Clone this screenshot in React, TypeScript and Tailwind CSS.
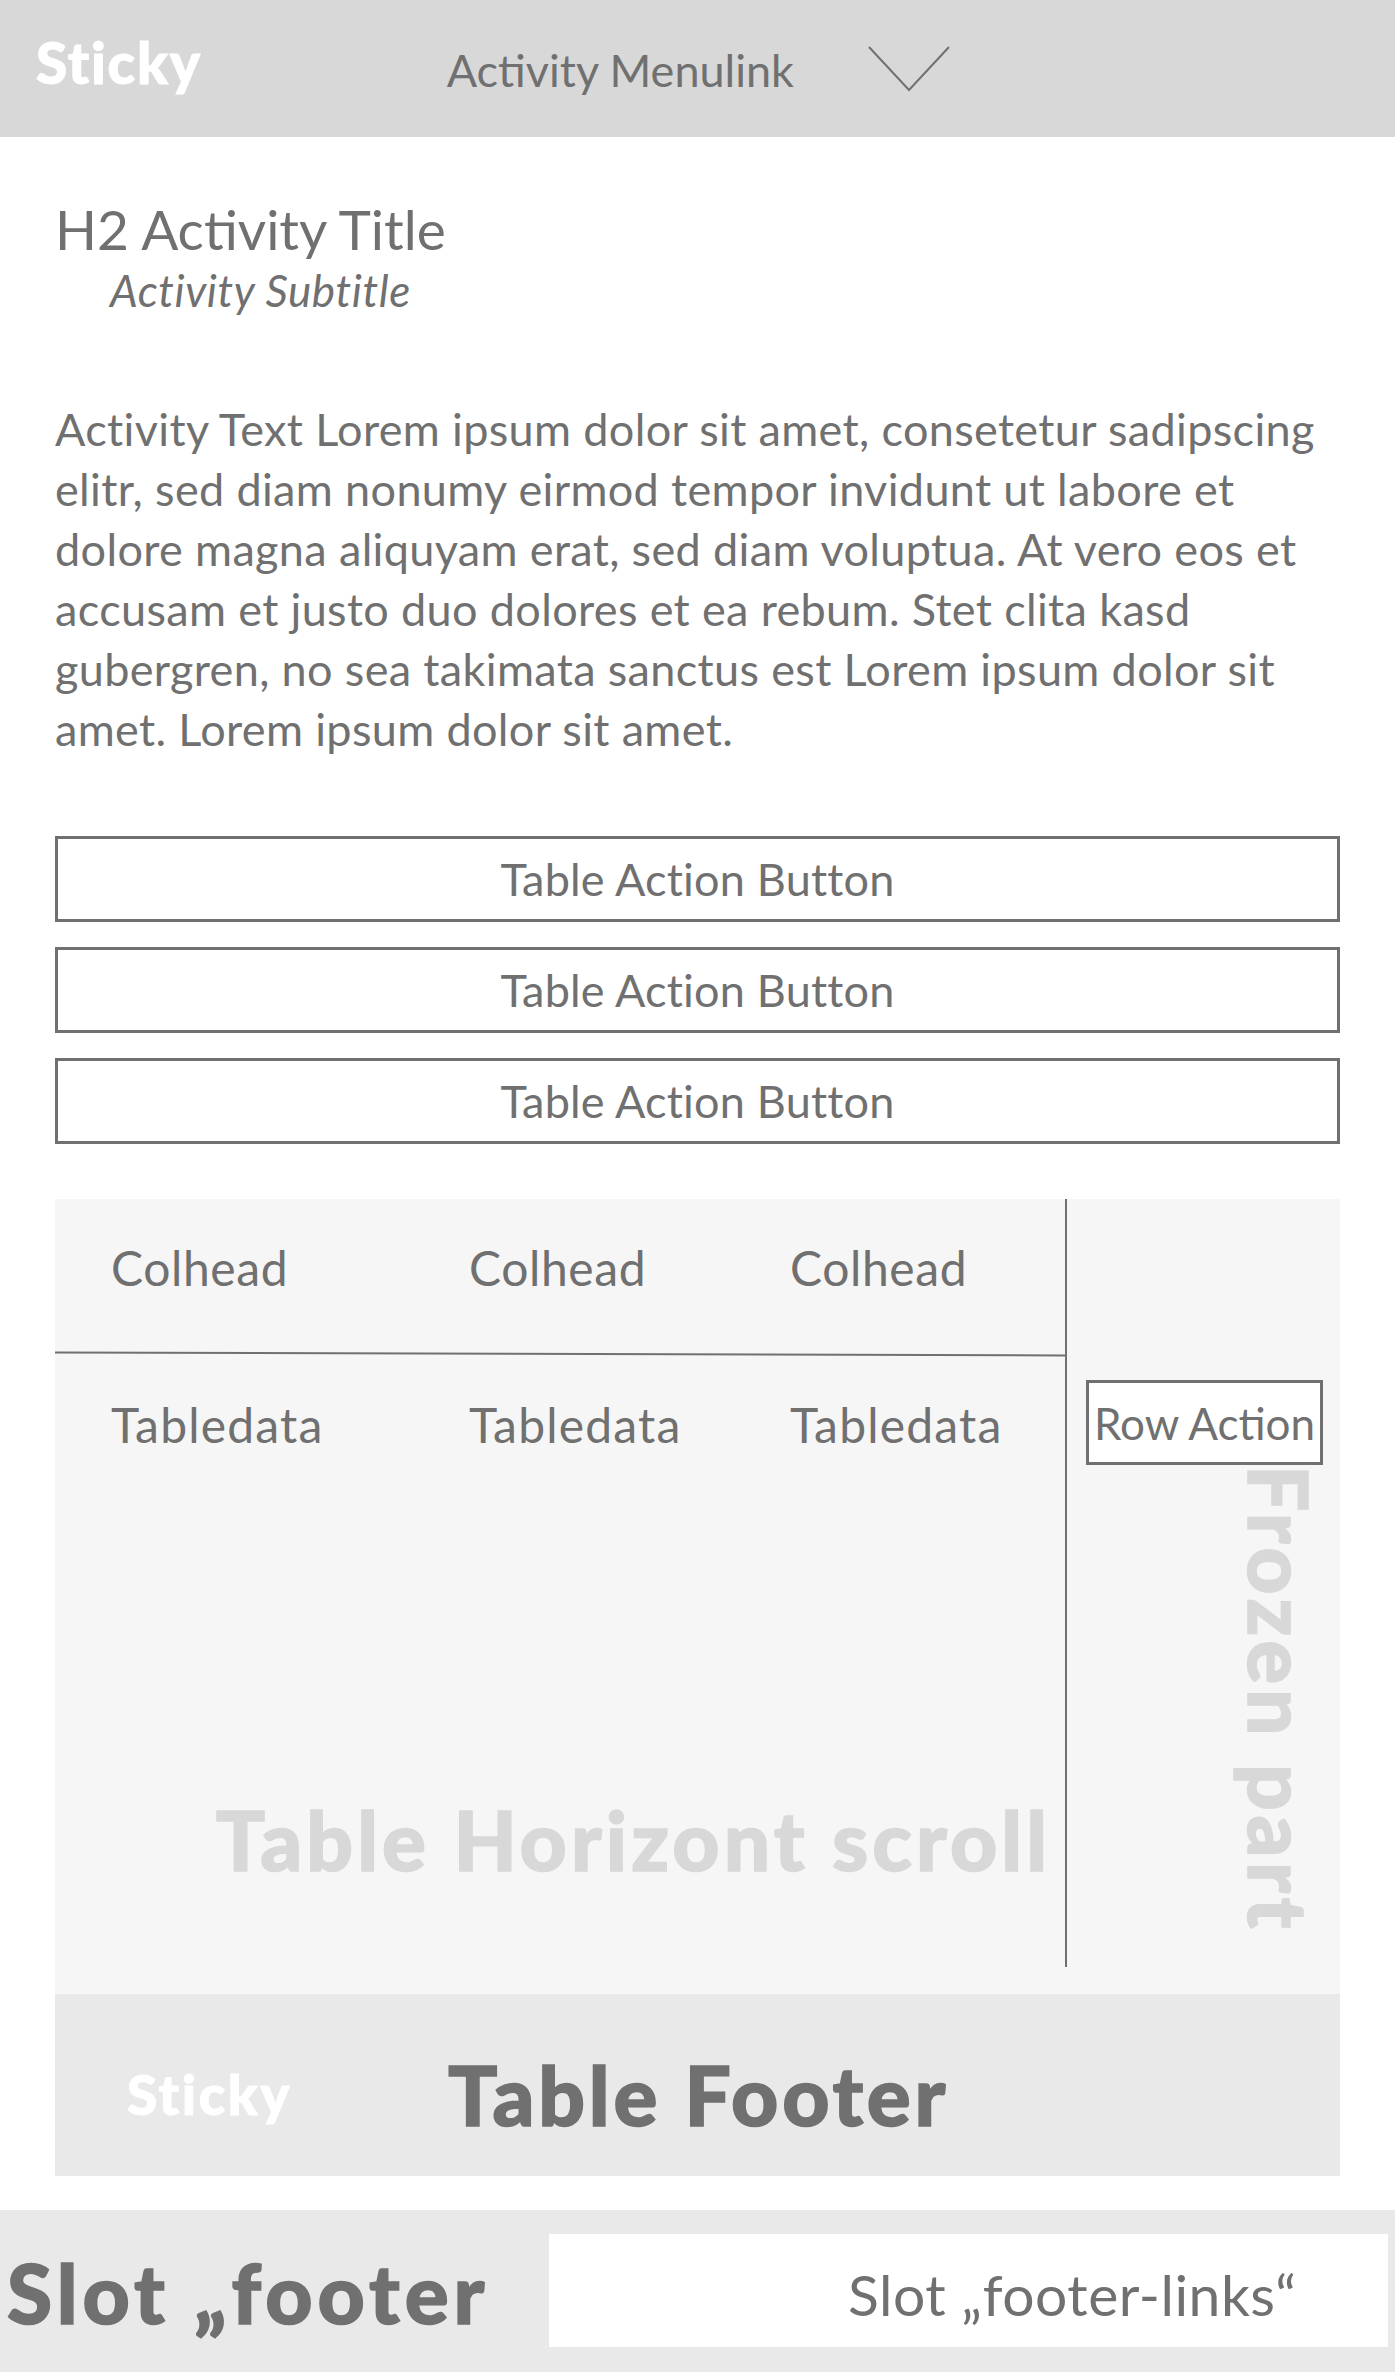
import React from "react";

const lines = [
  "Activity Text Lorem ipsum dolor sit amet, consetetur sadipscing",
  "elitr, sed diam nonumy eirmod tempor invidunt ut labore et",
  "dolore magna aliquyam erat, sed diam voluptua. At vero eos et",
  "accusam et justo duo dolores et ea rebum. Stet clita kasd",
  "gubergren, no sea takimata sanctus est Lorem ipsum dolor sit",
  "amet. Lorem ipsum dolor sit amet.",
];

function ActionButton() {
  return (
    <button className="h-[86px] w-full border-[3px] border-[#707070] bg-white text-[45px] leading-none tracking-[0.2px] text-[#707070]">
      Table Action Button
    </button>
  );
}

export default function App() {
  return (
    <div className="min-h-[2373px] bg-white font-[Lato,sans-serif] text-[#707070]">
      {/* Sticky header */}
      <header className="flex h-[137px] items-start bg-[#d8d8d8]">
        <span className="ml-[36px] mt-[34px] text-[57px] font-black leading-none tracking-[1.7px] text-white [-webkit-text-stroke:1px_currentColor]">
          Sticky
        </span>
        <span className="ml-[245px] mt-[48px] text-[45px] leading-none">Activity Menulink</span>
        <svg className="ml-[74px] mt-[46px]" width="82" height="46" viewBox="0 0 82 46">
          <polyline points="1,1 41,44 81,1" fill="none" stroke="#707070" strokeWidth="2" />
        </svg>
      </header>

      <main className="px-[55px] pt-[65px]">
        <h2 className="text-[55px] font-normal leading-none">H2 Activity Title</h2>
        <p className="ml-[55px] mt-[11px] text-[44px] italic leading-none tracking-[0.6px]">Activity Subtitle</p>

        <p className="mt-[87px] text-[45px] leading-[60px] tracking-[0.35px]">
          {lines.map((l, i) => (
            <span key={i} className="block whitespace-nowrap">
              {l}
            </span>
          ))}
        </p>

        <div className="mt-[77px] flex flex-col gap-[25px]">
          <ActionButton />
          <ActionButton />
          <ActionButton />
        </div>

        {/* Table */}
        <section className="mt-[55px] bg-[#f6f6f6]">
          <div className="flex">
            <div className="flex h-[768px] w-[1012px] flex-col border-r-2 border-[#707070]">
              <div className="grid h-[154px] grid-cols-[358px_321px_1fr] pl-[56px] pt-[45px] text-[48px] leading-none tracking-[0.6px]">
                <span>Colhead</span>
                <span>Colhead</span>
                <span>Colhead</span>
              </div>
              <div className="h-[2px] rotate-[0.17deg] bg-[#707070]" />
              <div className="grid grid-cols-[358px_321px_1fr] pl-[56px] pt-[46px] text-[48px] leading-none tracking-[1.2px]">
                <span>Tabledata</span>
                <span>Tabledata</span>
                <span>Tabledata</span>
              </div>
              <div className="flex flex-1 items-end justify-end pb-[87px] pr-[14px]">
                <span className="text-[82px] font-black leading-none tracking-[4px] text-[#d8d8d8] [-webkit-text-stroke:1.5px_currentColor]">
                  Table Horizont scroll
                </span>
              </div>
            </div>
            <div className="flex flex-1 flex-col">
              <div className="ml-[19px] mt-[181px] flex h-[85px] w-[237px] items-center justify-center border-[3px] border-[#707070] bg-white text-[44px] leading-none">
                Row Action
              </div>
              <span className="mr-[19px] self-end text-[82px] font-black leading-none tracking-[4.6px] text-[#d8d8d8] [-webkit-text-stroke:1.5px_currentColor] [writing-mode:vertical-rl]">
                Frozen part
              </span>
            </div>
          </div>
          <div className="h-[27px]" />
          {/* Sticky table footer */}
          <div className="flex h-[182px] items-start bg-[#e9e9e9]">
            <span className="ml-[72px] mt-[73px] text-[55px] font-black leading-none tracking-[2.5px] text-white [-webkit-text-stroke:1px_currentColor]">
              Sticky
            </span>
            <span className="ml-[156px] mt-[59px] text-[82px] font-black leading-none tracking-[3.8px] [-webkit-text-stroke:1.5px_currentColor]">
              Table Footer
            </span>
          </div>
        </section>
      </main>

      {/* Page footer */}
      <footer className="mt-[34px] flex h-[162px] items-start bg-[#e9e9e9]">
        <span className="ml-[7px] mt-[41px] whitespace-nowrap text-[82px] font-black leading-none tracking-[5px] [-webkit-text-stroke:1.5px_currentColor]">
          Slot „footer
        </span>
        <div className="ml-auto mr-[7px] mt-[24px] h-[113px] w-[839px] bg-white pl-[299px] pt-[32px]">
          <span className="whitespace-nowrap text-[57px] leading-none tracking-[0.5px]">Slot „footer-links“</span>
        </div>
      </footer>
    </div>
  );
}
